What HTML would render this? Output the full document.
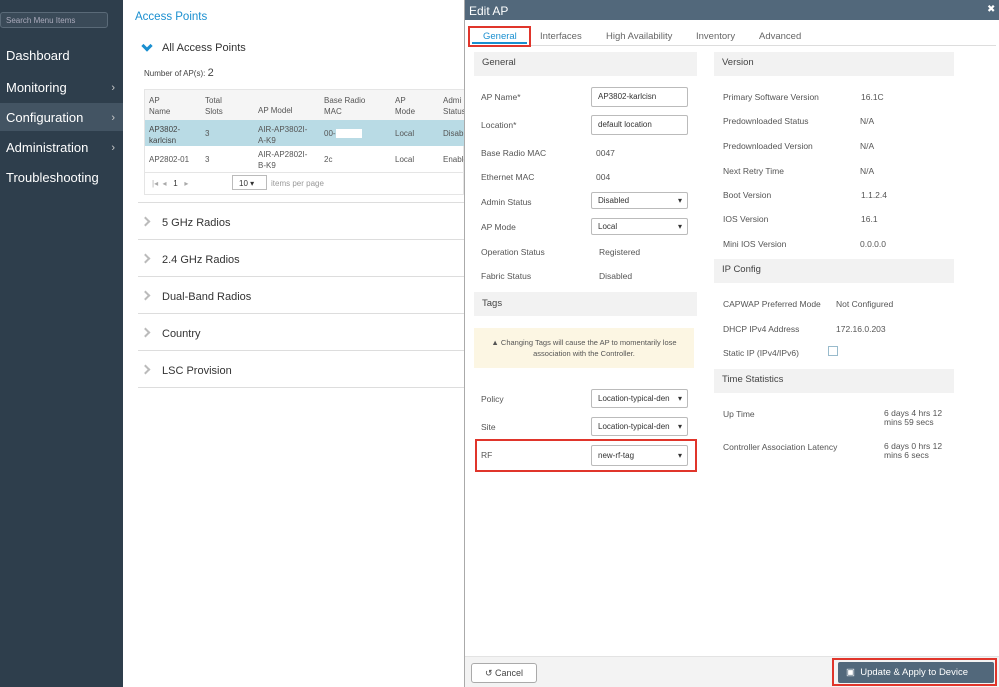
<!DOCTYPE html>
<html><head><meta charset="utf-8"><style>
*{margin:0;padding:0;box-sizing:border-box}
body{width:999px;height:687px;position:relative;overflow:hidden;font-family:"Liberation Sans",sans-serif;background:#fff;color:#333}
.a{position:absolute;white-space:nowrap}
#side{position:absolute;left:0;top:0;width:123px;height:687px;background:#2e3e4c}
.nav{position:absolute;left:6px;color:#fff;font-size:13px}
.chev{position:absolute;right:8px;color:#ccc;font-size:11px}
.t{font-size:8px;color:#555}
.l{font-size:8.5px;color:#555}
.hdr{position:absolute;background:#f2f2f2;font-size:9.5px;color:#444;padding-left:8px}
.inp{position:absolute;border:1px solid #bbb;background:#fff;font-size:8px;color:#333;padding-left:6px;border-radius:2px}
.sel::after{content:"▾";position:absolute;right:5px;top:0;font-size:8px}
.acc{position:absolute;left:138px;width:326px;height:37px;border-bottom:1px solid #ddd;font-size:11px;color:#333}
.rc{position:absolute;left:4px;top:15px;width:7px;height:7px;border-top:2px solid #bbb;border-right:2px solid #bbb;transform:rotate(45deg)}
</style></head><body>
<div id="side">
 <div class="a" style="left:0;top:12px;width:108px;height:16px;border:1px solid #5a6a78;border-radius:3px;background:#3a4a58;color:#aab;font-size:8px;padding:3px 0 0 5px">Search Menu Items</div>
 <div class="nav" style="top:48px">Dashboard</div>
 <div class="nav" style="top:80px">Monitoring</div><div class="chev" style="top:82px">›</div>
 <div class="a" style="left:0;top:103px;width:123px;height:28px;background:#435463"></div>
 <div class="nav" style="top:110px">Configuration</div><div class="chev" style="top:112px">›</div>
 <div class="nav" style="top:140px">Administration</div><div class="chev" style="top:142px">›</div>
 <div class="nav" style="top:170px">Troubleshooting</div>
</div>
<div class="a" style="left:135px;top:11px;color:#1a8fd0;font-size:11.5px">Access Points</div>
<div class="a" style="left:143px;top:42px;width:8px;height:8px;border-right:3px solid #1a8fd0;border-bottom:3px solid #1a8fd0;transform:rotate(45deg)"></div>
<div class="a" style="left:162px;top:42px;font-size:11px;color:#333">All Access Points</div>
<div class="a" style="left:144px;top:67px;font-size:8px;color:#444">Number of AP(s): <span style="font-size:11px">2</span></div>
<div class="a" style="left:144px;top:89px;width:320px;height:106px;border:1px solid #e5e5e5"></div>
<div class="a" style="left:145px;top:90px;width:319px;height:30px;background:#f5f5f5"></div>
<div class="a t" style="left:149px;top:95px;line-height:11px">AP<br>Name</div>
<div class="a t" style="left:205px;top:95px;line-height:11px">Total<br>Slots</div>
<div class="a t" style="left:258px;top:106px">AP Model</div>
<div class="a t" style="left:324px;top:95px;line-height:11px">Base Radio<br>MAC</div>
<div class="a t" style="left:395px;top:95px;line-height:11px">AP<br>Mode</div>
<div class="a t" style="left:443px;top:95px;line-height:11px">Admi<br>Status</div>
<div class="a" style="left:145px;top:120px;width:319px;height:26px;background:#b9dbe5"></div>
<div class="a t" style="left:149px;top:124px;line-height:11px;color:#444">AP3802-<br>karlcisn</div>
<div class="a t" style="left:205px;top:129px">3</div>
<div class="a t" style="left:258px;top:124px;line-height:11px">AIR-AP3802I-<br>A-K9</div>
<div class="a t" style="left:324px;top:129px">00-<span style="background:#fff">&nbsp;&nbsp;&nbsp;&nbsp;&nbsp;&nbsp;&nbsp;&nbsp;&nbsp;&nbsp;&nbsp;&nbsp;</span></div>
<div class="a t" style="left:395px;top:129px">Local</div>
<div class="a t" style="left:443px;top:129px">Disab</div>
<div class="a t" style="left:149px;top:155px">AP2802-01</div>
<div class="a t" style="left:205px;top:155px">3</div>
<div class="a t" style="left:258px;top:149px;line-height:11px">AIR-AP2802I-<br>B-K9</div>
<div class="a t" style="left:324px;top:155px">2c</div>
<div class="a t" style="left:395px;top:155px">Local</div>
<div class="a t" style="left:443px;top:155px">Enable</div>
<div class="a" style="left:145px;top:172px;width:319px;height:1px;background:#e5e5e5"></div>
<div class="a t" style="left:152px;top:179px;color:#aaa">|◂ &nbsp;◂ &nbsp;&nbsp;<span style="color:#333">1</span> &nbsp;&nbsp;▸</div>
<div class="a" style="left:232px;top:175px;width:35px;height:15px;border:1px solid #bbb;font-size:8px;padding:3px 0 0 6px">10 ▾</div>
<div class="a t" style="left:271px;top:179px;color:#999">items per page</div>
<div class="a" style="left:138px;top:202px;width:326px;height:1px;background:#ddd"></div>
<div class="acc" style="top:203px"><span class="rc"></span><span class="a" style="left:24px;top:14px">5 GHz Radios</span></div>
<div class="acc" style="top:240px"><span class="rc"></span><span class="a" style="left:24px;top:14px">2.4 GHz Radios</span></div>
<div class="acc" style="top:277px"><span class="rc"></span><span class="a" style="left:24px;top:14px">Dual-Band Radios</span></div>
<div class="acc" style="top:314px"><span class="rc"></span><span class="a" style="left:24px;top:14px">Country</span></div>
<div class="acc" style="top:351px"><span class="rc"></span><span class="a" style="left:24px;top:14px">LSC Provision</span></div>

<!-- modal -->
<div class="a" style="left:464px;top:0;width:535px;height:687px;background:#fff;border-left:1px solid #aaa"></div>
<div class="a" style="left:465px;top:0;width:534px;height:20px;background:#52687b"></div>
<div class="a" style="left:469px;top:4px;color:#fff;font-size:12px">Edit AP</div>
<div class="a" style="left:987px;top:4px;color:#fff;font-size:10px">✖</div>
<div class="a" style="left:469px;top:45px;width:527px;height:1px;background:#ddd"></div>
<div class="a" style="left:468px;top:26px;width:63px;height:21px;border:2px solid #e0352b"></div>
<div class="a" style="left:472px;top:42px;width:55px;height:2px;background:#1a8fd0"></div>
<div class="a" style="left:483px;top:31px;font-size:9.5px;color:#1a8fd0">General</div>
<div class="a" style="left:540px;top:31px;font-size:9.5px;color:#666">Interfaces</div>
<div class="a" style="left:606px;top:31px;font-size:9.5px;color:#666">High Availability</div>
<div class="a" style="left:696px;top:31px;font-size:9.5px;color:#666">Inventory</div>
<div class="a" style="left:759px;top:31px;font-size:9.5px;color:#666">Advanced</div>

<div class="hdr" style="left:474px;top:52px;width:223px;height:24px;line-height:22px">General</div>
<div class="a l" style="left:481px;top:92px">AP Name*</div>
<div class="inp" style="left:591px;top:87px;width:97px;height:20px;line-height:18px">AP3802-karlcisn</div>
<div class="a l" style="left:481px;top:120px">Location*</div>
<div class="inp" style="left:591px;top:115px;width:97px;height:20px;line-height:18px">default location</div>
<div class="a l" style="left:481px;top:148px">Base Radio MAC</div><div class="a l" style="left:596px;top:148px">0047</div>
<div class="a l" style="left:481px;top:172px">Ethernet MAC</div><div class="a l" style="left:596px;top:172px">004</div>
<div class="a l" style="left:481px;top:197px">Admin Status</div>
<div class="inp sel" style="left:591px;top:192px;width:97px;height:17px;line-height:15px">Disabled</div>
<div class="a l" style="left:481px;top:222px">AP Mode</div>
<div class="inp sel" style="left:591px;top:218px;width:97px;height:17px;line-height:15px">Local</div>
<div class="a l" style="left:481px;top:247px">Operation Status</div><div class="a l" style="left:599px;top:247px">Registered</div>
<div class="a l" style="left:481px;top:271px">Fabric Status</div><div class="a l" style="left:599px;top:271px">Disabled</div>
<div class="hdr" style="left:474px;top:292px;width:223px;height:24px;line-height:24px">Tags</div>
<div class="a" style="left:474px;top:328px;width:220px;height:40px;background:#fcf6e3;font-size:7.5px;color:#555;text-align:center;line-height:11px;padding-top:9px">▲ Changing Tags will cause the AP to momentarily lose<br>association with the Controller.</div>
<div class="a l" style="left:481px;top:394px">Policy</div>
<div class="inp sel" style="left:591px;top:389px;width:97px;height:19px;line-height:17px;overflow:hidden">Location-typical-den</div>
<div class="a l" style="left:481px;top:422px">Site</div>
<div class="inp sel" style="left:591px;top:417px;width:97px;height:19px;line-height:17px;overflow:hidden">Location-typical-den</div>
<div class="a" style="left:475px;top:439px;width:222px;height:33px;border:2px solid #e0352b"></div>
<div class="a l" style="left:481px;top:450px">RF</div>
<div class="inp sel" style="left:591px;top:445px;width:97px;height:21px;line-height:19px">new-rf-tag</div>

<div class="hdr" style="left:714px;top:52px;width:240px;height:24px;line-height:22px">Version</div>
<div class="a l" style="left:723px;top:92px">Primary Software Version</div><div class="a l" style="left:861px;top:92px">16.1C</div>
<div class="a l" style="left:723px;top:116px">Predownloaded Status</div><div class="a l" style="left:860px;top:116px">N/A</div>
<div class="a l" style="left:723px;top:141px">Predownloaded Version</div><div class="a l" style="left:860px;top:141px">N/A</div>
<div class="a l" style="left:723px;top:166px">Next Retry Time</div><div class="a l" style="left:860px;top:166px">N/A</div>
<div class="a l" style="left:723px;top:190px">Boot Version</div><div class="a l" style="left:861px;top:190px">1.1.2.4</div>
<div class="a l" style="left:723px;top:214px">IOS Version</div><div class="a l" style="left:861px;top:214px">16.1</div>
<div class="a l" style="left:723px;top:239px">Mini IOS Version</div><div class="a l" style="left:860px;top:239px">0.0.0.0</div>
<div class="hdr" style="left:714px;top:259px;width:240px;height:24px;line-height:22px">IP Config</div>
<div class="a l" style="left:723px;top:299px">CAPWAP Preferred Mode</div><div class="a l" style="left:836px;top:299px">Not Configured</div>
<div class="a l" style="left:723px;top:324px">DHCP IPv4 Address</div><div class="a l" style="left:836px;top:324px">172.16.0.203</div>
<div class="a l" style="left:723px;top:348px">Static IP (IPv4/IPv6)</div>
<div class="a" style="left:828px;top:346px;width:10px;height:10px;border:1px solid #9bc"></div>
<div class="hdr" style="left:714px;top:369px;width:240px;height:24px;line-height:22px">Time Statistics</div>
<div class="a l" style="left:723px;top:409px">Up Time</div>
<div class="a l" style="left:884px;top:409px;line-height:9px">6 days 4 hrs 12<br>mins 59 secs</div>
<div class="a l" style="left:723px;top:442px">Controller Association Latency</div>
<div class="a l" style="left:884px;top:442px;line-height:9px">6 days 0 hrs 12<br>mins 6 secs</div>

<div class="a" style="left:465px;top:656px;width:534px;height:31px;background:#f3f3f3;border-top:1px solid #e3e3e3"></div>
<div class="a" style="left:471px;top:663px;width:66px;height:20px;border:1px solid #aaa;border-radius:3px;background:#fff;font-size:9px;color:#444;text-align:center;line-height:18px">↺ Cancel</div>
<div class="a" style="left:832px;top:658px;width:165px;height:28px;border:2px solid #e0352b"></div>
<div class="a" style="left:838px;top:662px;width:156px;height:21px;background:#52687b;border-radius:2px;color:#fff;font-size:9.5px;line-height:21px;padding-left:8px">▣ &nbsp;Update &amp; Apply to Device</div>
</body></html>
